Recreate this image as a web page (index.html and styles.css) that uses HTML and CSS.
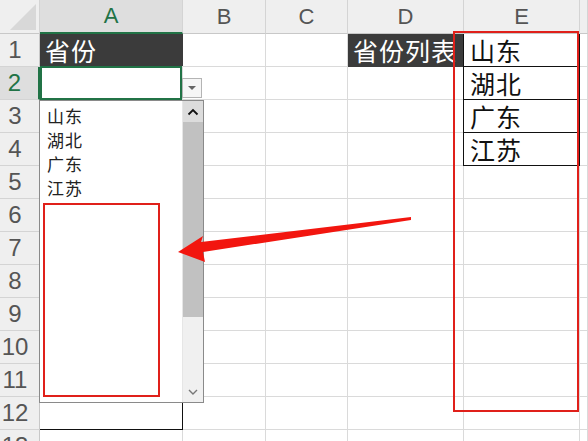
FILE: index.html
```html
<!DOCTYPE html>
<html lang="zh-CN">
<head>
    <meta charset="UTF-8">
    <title>省份下拉列表</title>
    <link rel="stylesheet" href="styles.css">
</head>
<body>
    <div class="sheet">
        <div class="grid">
            <!-- cabeçalho das colunas -->
            <div class="corner"><span class="corner-tri"></span></div>
            <div class="col-head active-head">A</div>
            <div class="col-head">B</div>
            <div class="col-head">C</div>
            <div class="col-head">D</div>
            <div class="col-head">E</div>
            <div class="col-head"></div>

            <div class="row-head">1</div>
            <div class="cell dark">省份</div>
            <div class="cell"></div>
            <div class="cell"></div>
            <div class="cell dark clip">省份列表</div>
            <div class="cell boxed">山东</div>
            <div class="cell"></div>

            <div class="row-head active-row">2</div>
            <div class="cell selected"></div>
            <div class="cell"></div>
            <div class="cell"></div>
            <div class="cell"></div>
            <div class="cell boxed">湖北</div>
            <div class="cell"></div>

            <div class="row-head">3</div>
            <div class="cell"></div>
            <div class="cell"></div>
            <div class="cell"></div>
            <div class="cell"></div>
            <div class="cell boxed">广东</div>
            <div class="cell"></div>

            <div class="row-head">4</div>
            <div class="cell"></div>
            <div class="cell"></div>
            <div class="cell"></div>
            <div class="cell"></div>
            <div class="cell boxed">江苏</div>
            <div class="cell"></div>

            <div class="row-head">5</div>
            <div class="cell"></div><div class="cell"></div><div class="cell"></div><div class="cell"></div><div class="cell"></div><div class="cell"></div>
            <div class="row-head">6</div>
            <div class="cell"></div><div class="cell"></div><div class="cell"></div><div class="cell"></div><div class="cell"></div><div class="cell"></div>
            <div class="row-head">7</div>
            <div class="cell"></div><div class="cell"></div><div class="cell"></div><div class="cell"></div><div class="cell"></div><div class="cell"></div>
            <div class="row-head">8</div>
            <div class="cell"></div><div class="cell"></div><div class="cell"></div><div class="cell"></div><div class="cell"></div><div class="cell"></div>
            <div class="row-head">9</div>
            <div class="cell"></div><div class="cell"></div><div class="cell"></div><div class="cell"></div><div class="cell"></div><div class="cell"></div>
            <div class="row-head">10</div>
            <div class="cell"></div><div class="cell"></div><div class="cell"></div><div class="cell"></div><div class="cell"></div><div class="cell"></div>
            <div class="row-head">11</div>
            <div class="cell"></div><div class="cell"></div><div class="cell"></div><div class="cell"></div><div class="cell"></div><div class="cell"></div>
            <div class="row-head">12</div>
            <div class="cell outlined"></div><div class="cell"></div><div class="cell"></div><div class="cell"></div><div class="cell"></div><div class="cell"></div>
            <div class="row-head">13</div>
            <div class="cell"></div><div class="cell"></div><div class="cell"></div><div class="cell"></div><div class="cell"></div><div class="cell"></div>
        </div>

        <!-- botão da validação de dados -->
        <div class="dd-button"><span class="dd-tri"></span></div>

        <!-- lista suspensa aberta -->
        <div class="dropdown">
            <ul class="dd-list">
                <li>山东</li>
                <li>湖北</li>
                <li>广东</li>
                <li>江苏</li>
            </ul>
            <div class="scrollbar">
                <div class="sb-btn">
                    <svg width="12" height="8" viewBox="0 0 12 8"><path d="M1.5 6.5 L6 2 L10.5 6.5" fill="none" stroke="#111" stroke-width="1.8"/></svg>
                </div>
                <div class="sb-thumb"></div>
                <div class="sb-track"></div>
                <div class="sb-btn down">
                    <svg width="12" height="8" viewBox="0 0 12 8"><path d="M2 2 L6 6 L10 2" fill="none" stroke="#777" stroke-width="1.4"/></svg>
                </div>
            </div>
        </div>

        <!-- marcações em vermelho -->
        <div class="mark mark-list"></div>
        <div class="mark mark-source"></div>
        <svg class="arrow" width="588" height="441" viewBox="0 0 588 441">
            <polygon points="411,217 201,242 203,236 178,252 205,262 203,252 411,220" fill="#f2160f"/>
        </svg>
    </div>
</body>
</html>
```

FILE: styles.css
```css
body {
    margin: 0;
    background-color: #fff;
    font-family: "Noto Sans CJK SC", "Liberation Sans", sans-serif;
    overflow: hidden;
}

.sheet {
    position: relative;
    width: 588px;
    height: 441px;
    overflow: hidden;
}

.grid {
    display: grid;
    grid-template-columns: 40px 143px 83px 82px 116px 116px 1fr;
    grid-template-rows: 34px;
    grid-auto-rows: 33px;
}

.corner {
    position: relative;
    background-color: #efefef;
    border-right: 1px solid #d4d4d4;
    border-bottom: 1px solid #c8c8c8;
    box-sizing: border-box;
}

.corner-tri {
    position: absolute;
    right: 3px;
    bottom: 3px;
    width: 0;
    height: 0;
    border-left: 26px solid transparent;
    border-bottom: 26px solid #d8d8d8;
}

.col-head {
    background-color: #efefef;
    border-right: 1px solid #d4d4d4;
    border-bottom: 1px solid #c8c8c8;
    box-sizing: border-box;
    font-family: "Liberation Sans", sans-serif;
    font-size: 22px;
    color: #555;
    display: flex;
    align-items: center;
    justify-content: center;
}

.col-head.active-head {
    background-color: #dedede;
    color: #217346;
    border-bottom: 2px solid #217346;
}

.row-head {
    background-color: #efefef;
    border-right: 1px solid #c8c8c8;
    border-bottom: 1px solid #d4d4d4;
    box-sizing: border-box;
    font-family: "Liberation Sans", sans-serif;
    font-size: 24px;
    color: #555;
    display: flex;
    align-items: center;
    justify-content: center;
    padding-right: 9px;
}

.row-head.active-row {
    background-color: #dedede;
    color: #217346;
    border-right: 2px solid #217346;
}

.cell {
    border-right: 1px solid #dadada;
    border-bottom: 1px solid #dadada;
    box-sizing: border-box;
    font-size: 25px;
    letter-spacing: 1px;
    line-height: 32px;
    padding-left: 5px;
    white-space: nowrap;
    color: #111;
}

.cell.dark {
    background-color: #3b3b3b;
    color: #fff;
    border-color: #3b3b3b;
}

.cell.clip {
    overflow: hidden;
    padding-left: 5px;
}

.cell.boxed {
    border: 1px solid #111;
    border-top: none;
    margin-left: -1px;
    padding-left: 6px;
}

.cell.selected {
    box-shadow: inset 0 0 0 2px #217346;
    margin-top: -1px;
    height: 35px;
}

.cell.outlined {
    border-right: 1px solid #111;
    border-bottom: 1px solid #111;
}

.dd-button {
    position: absolute;
    left: 182px;
    top: 78px;
    width: 20px;
    height: 20px;
    box-sizing: border-box;
    border: 1px solid #b4b4b4;
    background-color: #f6f6f6;
    display: flex;
    align-items: center;
    justify-content: center;
}

.dd-tri {
    width: 0;
    height: 0;
    border-left: 4px solid transparent;
    border-right: 4px solid transparent;
    border-top: 4px solid #666;
}

.dropdown {
    position: absolute;
    left: 39px;
    top: 100px;
    width: 165px;
    height: 303px;
    box-sizing: border-box;
    background-color: #fff;
    border: 1px solid #8a8a8a;
    display: flex;
}

.dd-list {
    list-style: none;
    margin: 0;
    padding: 3px 0 0 7px;
    flex: 1;
    font-size: 17px;
    letter-spacing: 1px;
    line-height: 24px;
    color: #222;
}

.scrollbar {
    width: 20px;
    display: flex;
    flex-direction: column;
    background-color: #f0f0f0;
    border-left: 1px solid #e6e6e6;
}

.sb-btn {
    height: 21px;
    background-color: #dcdcdc;
    display: flex;
    align-items: center;
    justify-content: center;
}

.sb-btn.down {
    background-color: #f0f0f0;
}

.sb-thumb {
    height: 195px;
    background-color: #c1c1c1;
}

.sb-track {
    flex: 1;
}

.mark {
    position: absolute;
    border: 2px solid #e0201a;
    box-sizing: border-box;
}

.mark-list {
    left: 43px;
    top: 203px;
    width: 117px;
    height: 194px;
}

.mark-source {
    left: 453px;
    top: 31px;
    width: 126px;
    height: 381px;
}

.arrow {
    position: absolute;
    left: 0;
    top: 0;
}
```
